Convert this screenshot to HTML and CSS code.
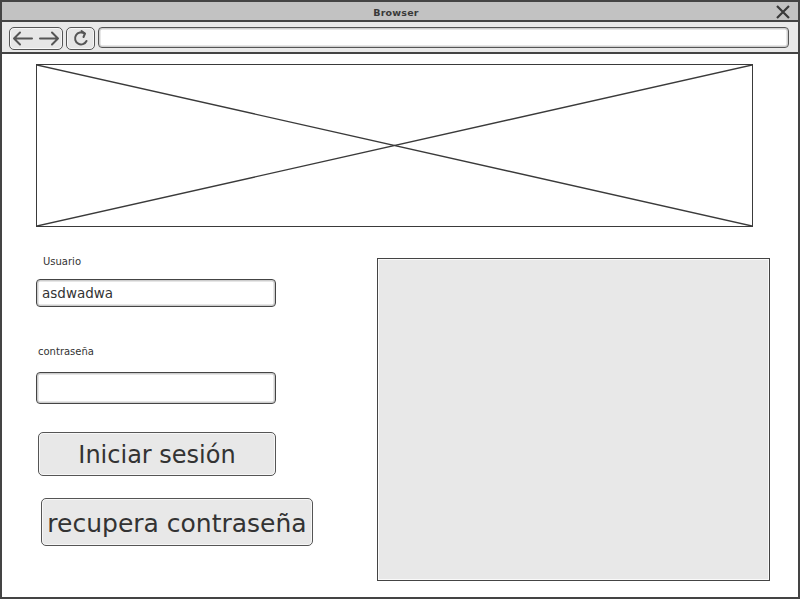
FILE: index.html
```html
<!DOCTYPE html>
<html>
<head>
<meta charset="utf-8">
<link rel="stylesheet" href="styles.css">
</head>
<body>
<div class="window">
  <div class="titlebar">
    <span></span>
    <span class="title">Browser</span>
    <svg class="close" width="14" height="14" viewBox="0 0 14 14"><path d="M1 1 L13 13 M13 1 L1 13" stroke="#3a3a3a" stroke-width="2.2" fill="none"/></svg>
  </div>
  <div class="toolbar">
    <div class="tbtn nav">
      <svg width="54" height="23" viewBox="0 0 54 23"><path d="M5 11.5 H23 M11 5.5 L5 11.5 L11 17.5 M31 11.5 H49 M43 5.5 L49 11.5 L43 17.5" stroke="#555" stroke-width="2" fill="none" stroke-linecap="round" stroke-linejoin="round"/></svg>
    </div>
    <div class="tbtn reload">
      <svg width="29" height="23" viewBox="0 0 29 23"><path d="M18.5 6.5 A6 6 0 1 0 20.5 14" stroke="#555" stroke-width="2" fill="none" stroke-linecap="round"/><path d="M15.5 4 L19 6.5 L17.5 10" stroke="#555" stroke-width="2" fill="none" stroke-linecap="round" stroke-linejoin="round"/></svg>
    </div>
    <div class="address"></div>
  </div>
  <div class="content">
    <div class="image">
      <svg width="100%" height="100%" viewBox="0 0 715 161" preserveAspectRatio="none"><path d="M0 0 L715 161 M715 0 L0 161" stroke="#3a3a3a" stroke-width="1.4" fill="none"/></svg>
    </div>
    <div class="row">
      <div class="form">
        <div class="label user-label">Usuario</div>
        <div class="field field-user">asdwadwa</div>
        <div class="label pass-label">contraseña</div>
        <div class="field field-pass"></div>
        <div class="button btn-login">Iniciar sesión</div>
        <div class="button btn-recover">recupera contraseña</div>
      </div>
      <div class="panel"></div>
    </div>
  </div>
</div>
</body>
</html>
```
FILE: styles.css
```css
* { box-sizing: border-box; }
html, body { margin: 0; padding: 0; background: #fff; }
body { font-family: "DejaVu Sans", sans-serif; color: #333; }

.window {
  width: 800px;
  height: 599px;
  border: 2px solid #444;
  display: flex;
  flex-direction: column;
  background: #fff;
}

.titlebar {
  height: 20px;
  background: #c2c2c2;
  border-bottom: 2px solid #444;
  display: grid;
  grid-template-columns: 1fr auto 1fr;
  align-items: center;
  padding: 1px 8px 0 0;
}
.title {
  font-size: 9.5px;
  font-weight: bold;
  color: #3a3a3a;
  letter-spacing: 0.2px;
  padding-top: 2px;
}
.close { justify-self: end; }

.toolbar {
  height: 32px;
  background: #e9e9e9;
  border-bottom: 2px solid #444;
  display: flex;
  align-items: flex-start;
  gap: 3px;
  padding: 5px 9px 0 7px;
}
.tbtn {
  height: 23px;
  border: 1.5px solid #555;
  border-radius: 5px;
  background: #e6e6e6;
  box-shadow: inset 0 0 0 1px #f6f6f6;
  display: flex;
}
.tbtn svg { margin: -1.5px; }
.nav { width: 54px; }
.reload { width: 29px; }
.address {
  flex: 1;
  height: 21px;
  border: 1.5px solid #555;
  border-radius: 4px;
  background: #fff;
  box-shadow: inset 0 0 0 1.5px #cfcfcf;
}

.content {
  flex: 1;
  display: flex;
  flex-direction: column;
  padding: 10px 0 0 34px;
}
.image {
  width: 717px;
  height: 163px;
  border: 1.5px solid #3a3a3a;
  display: flex;
}

.row {
  display: flex;
  margin-top: 23px;
}
.form {
  width: 277px;
  display: flex;
  flex-direction: column;
  align-items: flex-start;
}
.label {
  font-size: 10px;
  line-height: 14px;
  color: #333;
}
.user-label { margin-top: 5px; padding-left: 7px; }
.pass-label { margin-top: 38px; padding-left: 2px; }

.field {
  width: 240px;
  border: 1.5px solid #444;
  border-radius: 4px;
  background: #fff;
  box-shadow: inset 0 0 0 1.5px #cdcdcd;
  font-size: 13.5px;
  color: #333;
  display: flex;
  align-items: center;
  padding-left: 5px;
}
.field-user { margin-top: 10px; height: 28px; }
.field-pass { margin-top: 13px; height: 32px; }

.button {
  border: 1.5px solid #555;
  border-radius: 5px;
  background: #e8e8e8;
  box-shadow: inset 0 0 0 1px #f7f7f7;
  display: flex;
  align-items: center;
  justify-content: center;
  color: #333;
  white-space: nowrap;
}
.btn-login {
  margin-top: 28px;
  margin-left: 2px;
  width: 238px;
  height: 44px;
  font-size: 24px;
  padding-top: 2px;
}
.btn-recover {
  margin-top: 22px;
  margin-left: 5px;
  width: 272px;
  height: 48px;
  font-size: 25px;
  padding-top: 2px;
}

.panel {
  margin-left: 64px;
  margin-top: 8px;
  width: 393px;
  height: 323px;
  border: 1px solid #444;
  background: #e8e8e8;
  box-shadow: inset 0 0 0 1px #fafafa;
}
```
